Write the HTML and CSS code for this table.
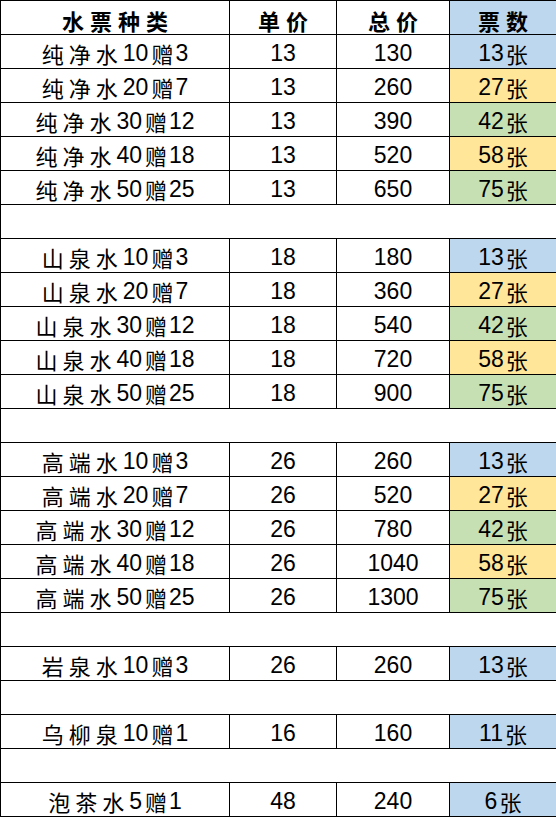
FILE: index.html
```html
<!DOCTYPE html>
<html lang="zh">
<head>
<meta charset="utf-8">
<title>水票价目表</title>
<link rel="stylesheet" href="styles.css">
</head>
<body>
<div class="sheet">
  <div class="cell head"><span class="zh end">水票种类</span></div>
  <div class="cell head"><span class="zh end">单价</span></div>
  <div class="cell head"><span class="zh end">总价</span></div>
  <div class="cell head blue"><span class="zh end">票数</span></div>

  <div class="cell"><span class="zh">纯净水</span>10<span class="zh mid">赠</span>3</div><div class="cell">13</div><div class="cell">130</div><div class="cell blue">13<span class="zh unit">张</span></div>
  <div class="cell"><span class="zh">纯净水</span>20<span class="zh mid">赠</span>7</div><div class="cell">13</div><div class="cell">260</div><div class="cell yellow">27<span class="zh unit">张</span></div>
  <div class="cell"><span class="zh">纯净水</span>30<span class="zh mid">赠</span>12</div><div class="cell">13</div><div class="cell">390</div><div class="cell green">42<span class="zh unit">张</span></div>
  <div class="cell"><span class="zh">纯净水</span>40<span class="zh mid">赠</span>18</div><div class="cell">13</div><div class="cell">520</div><div class="cell yellow">58<span class="zh unit">张</span></div>
  <div class="cell"><span class="zh">纯净水</span>50<span class="zh mid">赠</span>25</div><div class="cell">13</div><div class="cell">650</div><div class="cell green">75<span class="zh unit">张</span></div>
  <div class="cell gap"></div>

  <div class="cell"><span class="zh">山泉水</span>10<span class="zh mid">赠</span>3</div><div class="cell">18</div><div class="cell">180</div><div class="cell blue">13<span class="zh unit">张</span></div>
  <div class="cell"><span class="zh">山泉水</span>20<span class="zh mid">赠</span>7</div><div class="cell">18</div><div class="cell">360</div><div class="cell yellow">27<span class="zh unit">张</span></div>
  <div class="cell"><span class="zh">山泉水</span>30<span class="zh mid">赠</span>12</div><div class="cell">18</div><div class="cell">540</div><div class="cell green">42<span class="zh unit">张</span></div>
  <div class="cell"><span class="zh">山泉水</span>40<span class="zh mid">赠</span>18</div><div class="cell">18</div><div class="cell">720</div><div class="cell yellow">58<span class="zh unit">张</span></div>
  <div class="cell"><span class="zh">山泉水</span>50<span class="zh mid">赠</span>25</div><div class="cell">18</div><div class="cell">900</div><div class="cell green">75<span class="zh unit">张</span></div>
  <div class="cell gap"></div>

  <div class="cell"><span class="zh">高端水</span>10<span class="zh mid">赠</span>3</div><div class="cell">26</div><div class="cell">260</div><div class="cell blue">13<span class="zh unit">张</span></div>
  <div class="cell"><span class="zh">高端水</span>20<span class="zh mid">赠</span>7</div><div class="cell">26</div><div class="cell">520</div><div class="cell yellow">27<span class="zh unit">张</span></div>
  <div class="cell"><span class="zh">高端水</span>30<span class="zh mid">赠</span>12</div><div class="cell">26</div><div class="cell">780</div><div class="cell green">42<span class="zh unit">张</span></div>
  <div class="cell"><span class="zh">高端水</span>40<span class="zh mid">赠</span>18</div><div class="cell">26</div><div class="cell">1040</div><div class="cell yellow">58<span class="zh unit">张</span></div>
  <div class="cell"><span class="zh">高端水</span>50<span class="zh mid">赠</span>25</div><div class="cell">26</div><div class="cell">1300</div><div class="cell green">75<span class="zh unit">张</span></div>
  <div class="cell gap"></div>

  <div class="cell"><span class="zh">岩泉水</span>10<span class="zh mid">赠</span>3</div><div class="cell">26</div><div class="cell">260</div><div class="cell blue">13<span class="zh unit">张</span></div>
  <div class="cell gap"></div>

  <div class="cell"><span class="zh">乌柳泉</span>10<span class="zh mid">赠</span>1</div><div class="cell">16</div><div class="cell">160</div><div class="cell blue">11<span class="zh unit">张</span></div>
  <div class="cell gap"></div>

  <div class="cell"><span class="zh">泡茶水</span>5<span class="zh mid">赠</span>1</div><div class="cell">48</div><div class="cell">240</div><div class="cell blue">6<span class="zh unit">张</span></div>
</div>
</body>
</html>
```

FILE: styles.css
```css
html, body {
  margin: 0;
  padding: 0;
  background: #ffffff;
  overflow: hidden;
}

.sheet {
  display: grid;
  grid-template-columns: 229px 107px 113px 107px;
  grid-auto-rows: 34px;
  border-top: 1px solid #000;
  border-left: 1px solid #000;
  width: 556px;
  box-sizing: border-box;
  font-family: "Liberation Sans", "Noto Sans CJK SC", sans-serif;
  font-size: 23px;
  color: #000;
}

.cell {
  box-sizing: border-box;
  border-right: 1px solid #000;
  border-bottom: 1px solid #000;
  display: flex;
  align-items: center;
  justify-content: center;
  padding-top: 3px;
  white-space: nowrap;
  line-height: 1;
}

.zh {
  font-family: "Noto Sans CJK SC", sans-serif;
  font-size: 22px;
  letter-spacing: 5px;
}

.zh.mid {
  letter-spacing: 0;
  margin: 0 2px 0 3px;
}

.zh.unit {
  letter-spacing: 0;
  margin-left: 2px;
}

.zh.end {
  margin-right: -5px;
}

.head {
  font-weight: bold;
  padding-top: 5px;
}

.head .zh {
  font-size: 22px;
  letter-spacing: 6px;
}

.head .zh.end {
  margin-right: -6px;
}

.gap {
  grid-column: 1 / -1;
}

.blue { background: #bdd7ee; }
.yellow { background: #ffe699; }
.green { background: #c6e0b4; }
```
